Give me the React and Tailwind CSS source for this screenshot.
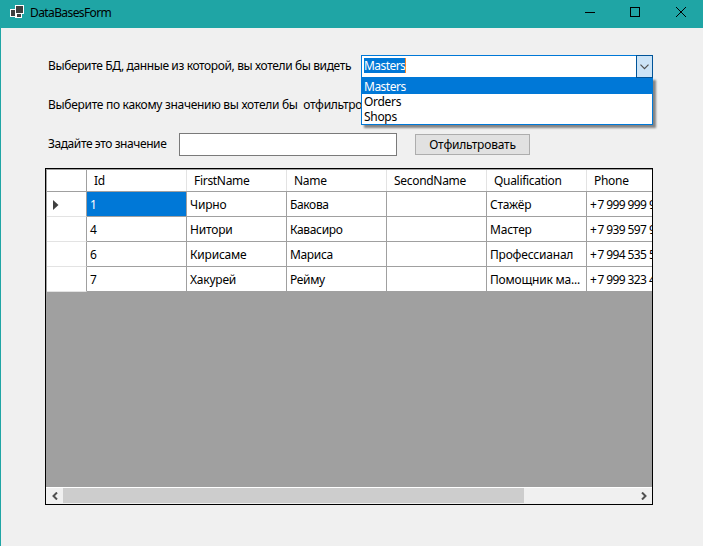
const columns = ["Id", "FirstName", "Name", "SecondName", "Qualification", "Phone"];

const rows = [
  ["1", "Чирно", "Бакова", "", "Стажёр", "+7 999 999 99 99"],
  ["4", "Нитори", "Кавасиро", "", "Мастер", "+7 939 597 93 21"],
  ["6", "Кирисаме", "Мариса", "", "Профессианал", "+7 994 535 53 35"],
  ["7", "Хакурей", "Рейму", "", "Помощник ма...", "+7 999 323 43 23"],
];

const cellTracking = [
  "tracking-[-0.2px]",
  "tracking-[-0.2px]",
  "tracking-[-0.35px]",
  "tracking-[-0.2px]",
  "tracking-[-0.2px]",
  "tracking-[-0.6px]",
];

function TitleBar() {
  return (
    <header className="flex h-7 items-start bg-[#1fa5a5] pl-[9px]">
      <svg width="14" height="13" viewBox="0 0 14 13" className="mt-[5px] shrink-0" shapeRendering="crispEdges">
        <rect x="5" y="7" width="7" height="6" fill="#fff" />
        <rect x="6" y="8" width="5" height="4" fill="#404040" />
        <rect x="0" y="4" width="7" height="8" fill="#fff" />
        <rect x="1" y="5" width="4" height="6" fill="#404040" />
        <rect x="5" y="0" width="9" height="9" fill="#fff" />
        <rect x="6" y="1" width="7" height="7" fill="#404040" />
      </svg>
      <h1 className="ml-[6px] mt-[4px] flex-1 text-[12px] leading-[18px] tracking-[-0.6px]">DataBasesForm</h1>
      <svg
        width="120"
        height="12"
        viewBox="0 0 120 12"
        className="mr-[7px] mt-[7px] shrink-0"
        fill="none"
        stroke="#000"
      >
        <path d="M9 5.5h10M54.5 .5h9v9h-9z" shapeRendering="crispEdges" />
        <path d="M100 0l10 10M110 0l-10 10" />
      </svg>
    </header>
  );
}

function ComboBox() {
  return (
    <div className="relative z-10 ml-auto h-[23px] w-[292px]">
      <div className="flex h-[23px] border border-[#0078d7] bg-white">
        <div className="flex flex-1 items-start pl-[2px] pt-[2px]">
          <span className="h-[15px] w-[42px] border-r border-[#ff8728] bg-[#0078d7] text-[12px] leading-[16px] tracking-[-0.55px] text-white">
            Masters
          </span>
        </div>
        <div className="relative z-10 -my-px -mr-px flex w-[17px] items-center justify-center border border-[#005499] bg-[#cce4f7]">
          <svg width="9" height="6" viewBox="0 0 9 6" fill="none" stroke="#505050" strokeWidth="1.2">
            <path d="M.5 .7l4 4 4-4" />
          </svg>
        </div>
      </div>
      <ul className="absolute left-0 top-[22px] h-[48px] w-[292px] border border-[#0078d7] bg-white text-[12px] leading-[15px] tracking-[-0.5px] shadow-[3px_3px_2px_rgba(0,0,0,0.45)]">
        <li className="h-[16px] bg-[#0078d7] pl-[2px] pt-px text-white">Masters</li>
        <li className="h-[15px] pl-[2px] tracking-[-0.3px]">Orders</li>
        <li className="h-[15px] pl-[2px] tracking-[-0.3px]">Shops</li>
      </ul>
    </div>
  );
}

function DataGrid() {
  return (
    <section className="mt-[12px] flex h-[337px] w-[608px] flex-col overflow-hidden border border-black bg-[#a0a0a0]">
      <div className="ml-px mt-px w-[640px]">
        <div className="flex h-[22px] border-b border-[#a0a0a0] bg-white">
          <div className="w-[40px] shrink-0 border-r border-[#a0a0a0]" />
          {columns.map((name) => (
            <div
              key={name}
              className="w-[100px] shrink-0 border-r border-[#e3e3e3] pl-[7px] leading-[22px] tracking-[-0.3px]"
            >
              {name}
            </div>
          ))}
        </div>
        {rows.map((row, r) => (
          <div key={row[0]} className="flex h-[25px] bg-white">
            <div className="flex w-[40px] shrink-0 items-center border-b border-r border-b-[#e3e3e3] border-r-[#a0a0a0] pl-[6px]">
              {r === 0 && (
                <svg width="6" height="10" viewBox="0 0 6 10" className="mt-[2px]">
                  <path d="M0 0l5.500 5-5.500 5z" fill="#404040" />
                </svg>
              )}
            </div>
            {row.map((value, c) => (
              <div
                key={c}
                className={`w-[100px] shrink-0 overflow-hidden whitespace-nowrap border-b border-r border-[#a0a0a0] pl-[3px] leading-[25px] ${
                  r === 0 && c === 0 ? "bg-[#0078d7] text-white" : ""
                } ${cellTracking[c]}`}
              >
                {c === 5 ? (
                  <>
                    <span className="tracking-[0.6px]">+</span>
                    {value.slice(1)}
                  </>
                ) : (
                  value
                )}
              </div>
            ))}
          </div>
        ))}
      </div>
      <div className="mt-auto flex h-[17px] items-center border-t border-white bg-[#f0f0f0]">
        <div className="flex w-[17px] justify-center">
          <svg width="6" height="8" viewBox="0 0 6 8" fill="none" stroke="#505050" strokeWidth="2">
            <path d="M5 .5L1.5 4 5 7.5" />
          </svg>
        </div>
        <div className="mb-px h-[15px] w-[461px] bg-[#cdcdcd]" />
        <div className="ml-auto flex w-[17px] justify-center">
          <svg width="6" height="8" viewBox="0 0 6 8" fill="none" stroke="#505050" strokeWidth="2">
            <path d="M1 .5L4.500 4 1 7.500" />
          </svg>
        </div>
      </div>
    </section>
  );
}

export default function App() {
  return (
    <div className="h-[546px] w-[703px] overflow-hidden border-l border-[#1fa5a5] bg-[#f0f0f0] font-['Noto_Sans','Open_Sans',sans-serif] text-[12px] text-black">
      <TitleBar />
      <main className="pl-[44px] pt-[27px]">
        <div className="flex h-[23px] w-[608px] items-center whitespace-nowrap pl-[3px]">
          <label className="w-[310px] pb-[2px] tracking-[-0.38px]">
            Выберите БД, данные из которой, вы хотели бы видеть
          </label>
          <ComboBox />
        </div>
        <div className="mt-[16px] flex h-[23px] items-center whitespace-pre pl-[3px]">
          <label className="pb-[2px] tracking-[-0.3px]">
            {"Выберите по какому значению вы хотели бы  отфильтровать"}
          </label>
        </div>
        <div className="mt-[16px] flex h-[23px] items-center pl-[3px]">
          <label className="w-[131px] whitespace-nowrap pb-[2px] tracking-[-0.42px]">Задайте это значение</label>
          <input className="h-[23px] w-[218px] border border-[#7a7a7a] bg-white px-1 outline-none" />
          <button className="ml-[18px] h-[21px] w-[115px] border border-[#adadad] bg-[#e1e1e1] leading-[19px] tracking-[-0.2px]">
            Отфильтровать
          </button>
        </div>
        <DataGrid />
      </main>
    </div>
  );
}
